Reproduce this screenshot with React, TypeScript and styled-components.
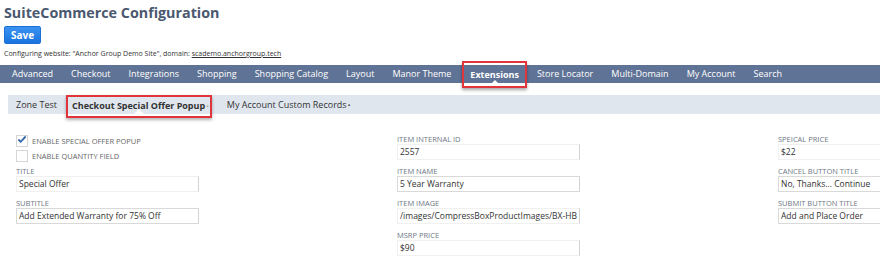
import styled, { createGlobalStyle } from "styled-components";

const GlobalStyle = createGlobalStyle`
  body {
    margin: 0;
    background: #fff;
    font-family: "Open Sans", "Liberation Sans", sans-serif;
    overflow: hidden;
  }
`;

const mainTabs = [
  "Advanced",
  "Checkout",
  "Integrations",
  "Shopping",
  "Shopping Catalog",
  "Layout",
  "Manor Theme",
  "Extensions",
  "Store Locator",
  "Multi-Domain",
  "My Account",
  "Search",
];

type Field = { label: string; value: string; full?: boolean };

const col2: Field[] = [
  { label: "Item Internal ID", value: "2557" },
  { label: "Item Name", value: "5 Year Warranty", full: true },
  { label: "Item Image", value: "/images/CompressBoxProductImages/BX-HB" },
  { label: "MSRP Price", value: "$90" },
];

const col3: Field[] = [
  { label: "Speical Price", value: "$22" },
  { label: "Cancel Button Title", value: "No, Thanks... Continue", full: true },
  { label: "Submit Button Title", value: "Add and Place Order", full: true },
];

const FieldBlock = ({ f }: { f: Field }) => (
  <FieldWrap>
    <Label>{f.label}</Label>
    <Input $full={f.full}>{f.value}</Input>
  </FieldWrap>
);

export default function App() {
  return (
    <Page>
      <GlobalStyle />
      <Header>
        <Title>SuiteCommerce Configuration</Title>
        <SaveButton>Save</SaveButton>
        <Info>
          Configuring website: "Anchor Group Demo Site", domain:{" "}
          <u>scademo.anchorgroup.tech</u>
        </Info>
      </Header>
      <NavBar>
        {mainTabs.map((t) => (
          <NavItem key={t} $active={t === "Extensions"}>
            {t}
          </NavItem>
        ))}
      </NavBar>
      <SubBar>
        <SubTab>Zone Test</SubTab>
        <SubTab $active>
          Checkout Special Offer Popup<Dot>•</Dot>
        </SubTab>
        <SubTab>
          My Account Custom Records<Dot $dark>•</Dot>
        </SubTab>
      </SubBar>
      <Form>
        <Column>
          <Checks>
            <CheckRow>
              <Box $checked>
                <svg width="11" height="9" viewBox="0 0 11 9">
                  <path
                    d="M1.5 4.5 L4 7 L9.5 1.2"
                    fill="none"
                    stroke="#3568a8"
                    strokeWidth="2"
                  />
                </svg>
              </Box>
              Enable Special Offer Popup
            </CheckRow>
            <CheckRow>
              <Box />
              Enable Quantity Field
            </CheckRow>
          </Checks>
          <FieldBlock f={{ label: "Title", value: "Special Offer" }} />
          <FieldBlock
            f={{ label: "Subtitle", value: "Add Extended Warranty for 75% Off", full: true }}
          />
        </Column>
        <Column>
          {col2.map((f) => (
            <FieldBlock key={f.label} f={f} />
          ))}
        </Column>
        <Column>
          {col3.map((f) => (
            <FieldBlock key={f.label} f={f} />
          ))}
        </Column>
      </Form>
    </Page>
  );
}

const Page = styled.div`
  width: 880px;
  height: 261px;
  overflow: hidden;
`;

const Header = styled.div`
  padding: 0 4px;
`;

const Title = styled.h1`
  margin: 0;
  padding-top: 2px;
  font-size: 14.3px;
  line-height: 22px;
  font-weight: 700;
  color: #4a5870;
`;

const SaveButton = styled.button`
  display: block;
  margin-top: 2px;
  width: 37px;
  height: 18px;
  padding: 0;
  border: 1px solid #1d6fd6;
  border-radius: 2px;
  background: linear-gradient(#3b92f0, #1a74e0);
  color: #fff;
  font-family: inherit;
  font-size: 10px;
  font-weight: 700;
`;

const Info = styled.div`
  margin-top: 4px;
  font-size: 7px;
  line-height: 12px;
  color: #333;
  u {
    color: #333;
  }
`;

const NavBar = styled.div`
  margin-top: 5px;
  height: 18px;
  display: flex;
  align-items: center;
  padding-left: 3px;
  background: #5f7396;
`;

const NavItem = styled.div<{ $active?: boolean }>`
  position: relative;
  box-sizing: border-box;
  padding: 0 9px;
  font-size: 9px;
  line-height: 18px;
  color: #fff;
  font-weight: ${(p) => (p.$active ? 700 : 400)};
  ${(p) =>
    p.$active &&
    `
    border: 2px solid #e0353b;
    box-shadow: 0 2px 3px rgba(0,0,0,0.35);
    height: 27px;
    line-height: 23px;
    padding: 0 6px;
    margin: 0 1px 0 2px;
    &::after {
      content: "";
      position: absolute;
      left: 50%;
      bottom: 3px;
      margin-left: -3px;
      border: 3px solid transparent;
      border-bottom-color: #fff;
      border-top: 0;
    }
  `}
`;

const SubBar = styled.div`
  margin: 12px 0 0 8px;
  height: 19px;
  display: flex;
  align-items: stretch;
  padding-left: 3px;
  background: #e0e6ee;
`;

const SubTab = styled.div<{ $active?: boolean }>`
  position: relative;
  padding: 0 5px;
  font-size: 9px;
  line-height: 19px;
  color: #333;
  font-weight: ${(p) => (p.$active ? 700 : 400)};
  ${(p) =>
    p.$active &&
    `
    border: 2px solid #e0353b;
    box-shadow: 0 2px 3px rgba(0,0,0,0.3);
    height: 23px;
    line-height: 18px;
    box-sizing: border-box;
    padding: 0 1px 0 4px;
    margin: 0 10px 0 4px;
    &::after {
      content: "";
      position: absolute;
      left: 50%;
      bottom: 2px;
      margin-left: -5px;
      border: 5px solid transparent;
      border-bottom-color: #fff;
      border-top: 0;
    }
  `}
`;

const Dot = styled.span<{ $dark?: boolean }>`
  margin-left: 1px;
  font-weight: 400;
  font-size: 7px;
  color: ${(p) => (p.$dark ? "#333" : "#aaa")};
`;

const Form = styled.div`
  display: grid;
  grid-template-columns: repeat(3, 183px);
  column-gap: 198px;
  padding: 18px 0 0 16px;
`;

const Column = styled.div`
  display: flex;
  flex-direction: column;
`;

const Checks = styled.div`
  height: 32px;
  padding-top: 1px;
  box-sizing: border-box;
`;

const CheckRow = styled.div`
  display: flex;
  align-items: center;
  gap: 4px;
  height: 15px;
  font-size: 7.5px;
  text-transform: uppercase;
  color: #666;
`;

const Box = styled.span<{ $checked?: boolean }>`
  width: 10px;
  height: 10px;
  border: 1px solid #d6d6d6;
  background: #fff;
  display: flex;
  align-items: center;
  justify-content: center;
  svg {
    margin-top: -2px;
  }
`;

const FieldWrap = styled.div`
  height: 32px;
`;

const Label = styled.div`
  font-size: 7.5px;
  line-height: 10px;
  padding-top: 2px;
  text-transform: uppercase;
  color: #6f7785;
`;

const Input = styled.div<{ $full?: boolean }>`
  box-sizing: border-box;
  height: 16px;
  padding-left: 2px;
  font-size: 8.5px;
  line-height: 14px;
  color: #333;
  white-space: nowrap;
  overflow: hidden;
  border: 1px solid ${(p) => (p.$full ? "#d9d9d9" : "#f0f0f0")};
  border-right-color: #d2d2d2;
`;
